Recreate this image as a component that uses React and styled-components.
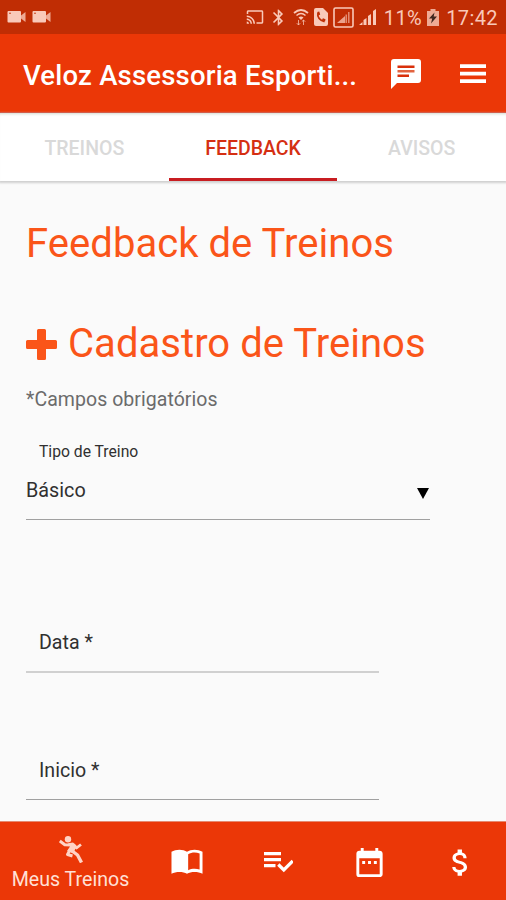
import { useState } from "react";
import styled, { createGlobalStyle } from "styled-components";
import {
  MdBluetooth,
  MdCast,
  MdDateRange,
  MdAttachMoney,
} from "react-icons/md";

const GlobalStyle = createGlobalStyle`
  * {
    box-sizing: border-box;
  }
  body {
    margin: 0;
    font-family: Roboto, "Liberation Sans", sans-serif;
  }
  button {
    font-family: inherit;
    border: none;
    padding: 0;
    background: none;
    cursor: pointer;
  }
`;

const Container = styled.div`
  width: 100%;
  height: 900px;
  display: flex;
  flex-direction: column;
  overflow: hidden;
  background-color: #fafafa;
`;

const StatusBar = styled.div`
  height: 34px;
  flex-shrink: 0;
  display: flex;
  align-items: center;
  justify-content: space-between;
  padding: 0 8px 0 7px;
  background-color: #c02d04;
  color: #f9c9b9;
`;

const StatusGroup = styled.div`
  display: flex;
  align-items: center;
  gap: ${(props) => props.$gap || 0}px;
  svg {
    display: block;
    flex-shrink: 0;
  }
`;

const StatusText = styled.span`
  font-size: 20px;
  line-height: 34px;
  padding-top: 1px;
  letter-spacing: 0.4px;
  margin-left: 2px;
`;

const Header = styled.header`
  height: 79px;
  flex-shrink: 0;
  display: flex;
  align-items: center;
  padding: 2px 20px 0 23px;
  background-color: #eb3707;
  border-bottom: 1px solid #d3260b;
  color: white;
`;

const Title = styled.h1`
  flex: 1;
  margin: 0;
  padding-top: 3px;
  font-size: 27.5px;
  font-weight: 500;
  line-height: 36px;
  white-space: nowrap;
  letter-spacing: 0.2px;
`;

const IconButton = styled.button`
  display: flex;
  color: white;
  margin-left: ${(props) => props.$left || 0}px;
`;

const Tabs = styled.nav`
  height: 68px;
  flex-shrink: 0;
  display: flex;
  background-color: white;
  box-shadow: inset 0 3px 3px -2px #d4dad0, 0 1px 2px 1px #cfcfcf;
`;

const Tab = styled.button`
  flex: 1;
  padding-top: 5px;
  font-size: 19.5px;
  font-weight: 500;
  color: ${(props) => (props.$active ? "#d52f12" : "#d9d9d9")};
  border-bottom: 3px solid ${(props) => (props.$active ? "#c81d21" : "transparent")};
`;

const Content = styled.main`
  flex: 1;
  min-height: 0;
  padding: 39px 26px 0;
  overflow: hidden;
`;

const Heading = styled.h2`
  display: flex;
  align-items: center;
  gap: 11px;
  margin: 0 0 ${(props) => props.$bottom}px;
  font-size: 40px;
  font-weight: 400;
  line-height: 48px;
  letter-spacing: 0.05px;
  color: #fa5519;
  white-space: nowrap;
`;

const Note = styled.p`
  margin: 0;
  font-size: 19.5px;
  line-height: 24px;
  letter-spacing: 0.05px;
  color: #6b6b6b;
`;

const Field = styled.div`
  width: ${(props) => props.$width}px;
  margin-top: ${(props) => props.$top}px;
  border-bottom: ${(props) => props.$line};
`;

const Label = styled.label`
  display: block;
  padding: 0 0 ${(props) => (props.$small ? 14 : 16)}px 13px;
  font-size: ${(props) => (props.$small ? 15.7 : 19.6)}px;
  line-height: 24px;
  color: #303030;
`;

const Select = styled.div`
  display: flex;
  align-items: center;
  justify-content: space-between;
  height: 24px;
  margin-bottom: 17px;
  padding-right: 1px;
  font-size: 19.8px;
  color: #303030;
  svg {
    margin-top: 6px;
  }
`;

const Footer = styled.footer`
  height: 79px;
  flex-shrink: 0;
  display: flex;
  background-color: #eb3707;
  border-top: 1px solid #e58a70;
`;

const FooterItem = styled.button`
  width: ${(props) => (props.$wide ? 141 : 91.25)}px;
  padding-top: ${(props) => (props.$wide ? 6 : 2)}px;
  display: flex;
  flex-direction: column;
  align-items: center;
  justify-content: center;
  color: ${(props) => (props.$wide ? "#ffd3c5" : "white")};
`;

const FooterLabel = styled.span`
  font-size: 19.6px;
  line-height: 24px;
  margin-top: 5px;
  color: #ffe0d6;
`;

const VideoIcon = () => (
  <svg width="19" height="14" viewBox="0 0 19 14" fill="currentColor">
    <path d="M1.500 1h11.500a1 1 0 0 1 1 1v9.500a1 1 0 0 1-1 1h-11.500a1 1 0 0 1-1-1v-9.500a1 1 0 0 1 1-1z" />
    <path d="M14 5.500L18.500 2v10L14 8.500z" opacity=".8" />
    <circle cx="3" cy="3.200" r=".8" fill="#c02d04" />
  </svg>
);

const WifiIcon = () => (
  <svg width="16" height="18" viewBox="0 0 16 18" fill="none" stroke="currentColor">
    <path d="M1 5Q8-1 15 5" strokeWidth="1.800" />
    <path d="M3.500 7.500Q8 3.500 12.500 7.500" strokeWidth="1.500" />
    <path d="M5.500 9.500Q8 7.500 10.500 9.500L8 12z" fill="currentColor" stroke="none" />
    <path d="M5.500 12v5M3.800 15.200l1.700 1.800 1.700-1.800M10.500 17v-5M8.800 13.700l1.700-1.700 1.700 1.700" opacity=".75" />
  </svg>
);

const SimCallIcon = () => (
  <svg width="14" height="18" viewBox="0 0 14 18">
    <path d="M2 0h7l5 5v11a2 2 0 0 1-2 2H2a2 2 0 0 1-2-2V2a2 2 0 0 1 2-2z" fill="currentColor" />
    <path d="M4 5C3 9 6 13 10.500 13.500" fill="none" stroke="#c02d04" strokeWidth="1.800" />
    <path d="M3.200 4l2-.5 1 3-1.700 1zM8 11.500l1-1.200 2.500 1-.5 2.500z" fill="#c02d04" />
  </svg>
);

const BoxedSignalIcon = () => (
  <svg width="21" height="21" viewBox="0 0 21 21" fill="none" stroke="currentColor">
    <rect x="1" y="1" width="19" height="19" rx="1.500" strokeWidth="1.600" />
    <path d="M4 16L12 9v7z" fill="currentColor" stroke="none" opacity=".75" />
    <path d="M13.200 16V7.500M15.800 16V5" strokeWidth="1.300" opacity=".7" />
  </svg>
);

const SignalIcon = () => (
  <svg width="18" height="18" viewBox="0 0 18 18" fill="currentColor">
    <path d="M0 17l3.500-3v3zM4.500 17v-5l3-2v7zM9 17V8l3-2v11zM14 17V3l3-2v16z" />
  </svg>
);

const BatteryIcon = () => (
  <svg width="12" height="17" viewBox="0 0 12 17">
    <path d="M3.500 0h5v2H12v15H0V2h3.500z" fill="currentColor" opacity=".8" />
    <path d="M7.500 3.500L2 9.500h3.200L4 14.500l6-7H6.700z" fill="#40271f" />
  </svg>
);

const ChatIcon = () => (
  <svg width="30" height="30" viewBox="0 0 30 30">
    <path d="M3 0h24a3 3 0 0 1 3 3v18a3 3 0 0 1-3 3H6l-6 6V3a3 3 0 0 1 3-3z" fill="white" />
    <path d="M6.500 6.500h17v2.500h-17zM6.500 15.500h11.500v2.500H6.500z" fill="#d9300b" />
    <path d="M6.500 11h17v2.500h-17z" fill="#e2633f" />
  </svg>
);

const MenuIcon = () => (
  <svg width="26" height="20" viewBox="0 0 26 20" fill="currentColor">
    <path d="M0 .3h26v3.700H0zM0 7.800h26v3.700H0zM0 15.300h26v3.700H0z" />
  </svg>
);

const PlusIcon = () => (
  <svg width="31" height="31" viewBox="0 0 31 31" fill="currentColor">
    <path d="M12.500 0h6a1.500 1.500 0 0 1 1.500 1.500V11h9.500a1.500 1.500 0 0 1 1.500 1.500v6a1.500 1.500 0 0 1-1.500 1.500H20v9.500a1.500 1.500 0 0 1-1.500 1.500h-6a1.500 1.500 0 0 1-1.500-1.500V20H1.500A1.500 1.500 0 0 1 0 18.500v-6A1.500 1.500 0 0 1 1.500 11H11V1.500A1.500 1.500 0 0 1 12.500 0z" />
  </svg>
);

const ArrowIcon = () => (
  <svg width="12" height="11" viewBox="0 0 12 11">
    <path d="M0 0h12L6 11z" fill="black" />
  </svg>
);

const RunnerIcon = () => (
  <svg width="24" height="27" viewBox="0 0 24 27" fill="none" stroke="currentColor" strokeLinejoin="round">
    <circle cx="9" cy="3.200" r="3.200" fill="currentColor" stroke="none" />
    <path d="M.8 5l5 3.700 6 .3" strokeWidth="3" />
    <path d="M9 7.300l5-.8 3.500 3-3 8-6.500-2.500 3-4.500z" fill="currentColor" stroke="none" />
    <path d="M14 8.500l3.500 3.500 4.500-3.500" strokeWidth="2.800" />
    <path d="M11 14l-2.500 4.500 5 1.500" strokeWidth="3" />
    <path d="M12.500 14.500l6 4.500 4 7.500" strokeWidth="3.400" />
  </svg>
);

const BookIcon = () => (
  <svg width="32" height="26" viewBox="0 0 33 26">
    <path
      d="M16.500 2.500C12.500-.3 5-.3.500 2.500V25c4.500-2.200 12-2.200 16 0 4-2.200 11.500-2.200 16 0V2.500C28-.3 20.500-.3 16.500 2.500zM29.500 20.700c-4-1.200-8.500-.9-11.800.7V5c3.300-2 7.800-2.300 11.800-.8z"
      fill="currentColor"
      fillRule="evenodd"
    />
  </svg>
);

const ChecklistIcon = () => (
  <svg width="30" height="21" viewBox="0 0 30 21">
    <path d="M1 0h17v3.200H1zM1 6h17v3.200H1zM1 12h11.500v3.200H1z" fill="currentColor" />
    <path d="M15.300 12.500l5.500 5.500 9-9" fill="none" stroke="currentColor" strokeWidth="3.200" />
  </svg>
);

const tabs = ["TREINOS", "FEEDBACK", "AVISOS"];

const App = () => {
  const [active, setActive] = useState("FEEDBACK");

  return (
    <Container>
      <GlobalStyle />
      <StatusBar>
        <StatusGroup $gap={6}>
          <VideoIcon />
          <VideoIcon />
        </StatusGroup>
        <StatusGroup $gap={5}>
          <MdCast size={18} />
          <MdBluetooth size={19} />
          <WifiIcon />
          <SimCallIcon />
          <BoxedSignalIcon />
          <SignalIcon />
          <StatusText>11%</StatusText>
          <BatteryIcon />
          <StatusText>17:42</StatusText>
        </StatusGroup>
      </StatusBar>
      <Header>
        <Title>Veloz Assessoria Esporti...</Title>
        <IconButton>
          <ChatIcon />
        </IconButton>
        <IconButton $left={39}>
          <MenuIcon />
        </IconButton>
      </Header>
      <Tabs>
        {tabs.map((tab) => (
          <Tab key={tab} $active={tab === active} onClick={() => setActive(tab)}>
            {tab}
          </Tab>
        ))}
      </Tabs>
      <Content>
        <Heading $bottom={52}>Feedback de Treinos</Heading>
        <Heading $bottom={20}>
          <PlusIcon />
          Cadastro de Treinos
        </Heading>
        <Note>*Campos obrigatórios</Note>
        <Field $width={404} $top={28} $line="1px solid #a0a0a0">
          <Label $small>Tipo de Treino</Label>
          <Select>
            Básico
            <ArrowIcon />
          </Select>
        </Field>
        <Field $width={353} $top={111} $line="2px solid #d0d0d0">
          <Label>Data *</Label>
        </Field>
        <Field $width={353} $top={86} $line="1px solid #a0a0a0">
          <Label>Inicio *</Label>
        </Field>
      </Content>
      <Footer>
        <FooterItem $wide>
          <RunnerIcon />
          <FooterLabel>Meus Treinos</FooterLabel>
        </FooterItem>
        <FooterItem>
          <BookIcon />
        </FooterItem>
        <FooterItem>
          <ChecklistIcon />
        </FooterItem>
        <FooterItem>
          <MdDateRange size={35} />
        </FooterItem>
        <FooterItem>
          <MdAttachMoney size={35} />
        </FooterItem>
      </Footer>
    </Container>
  );
};

export default App;
